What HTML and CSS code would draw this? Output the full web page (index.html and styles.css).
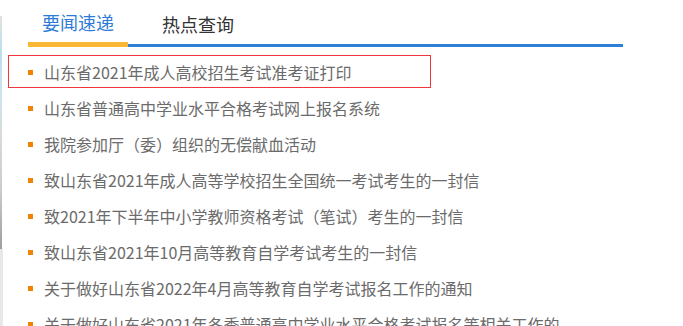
FILE: index.html
```html
<!DOCTYPE html>
<html lang="zh-CN">
<head>
<meta charset="utf-8">
<title>要闻速递</title>
<link rel="stylesheet" href="styles.css">
</head>
<body>
<div class="page">
  <div class="edge">
    <div class="edge-img"></div>
    <div class="edge-grey"></div>
  </div>
  <div class="main">
    <div class="tabs">
      <div class="tab active">要闻速递</div>
      <div class="tab">热点查询</div>
    </div>
    <ul class="news">
      <li class="item focused"><span class="dot"></span>山东省2021年成人高校招生考试准考证打印</li>
      <li class="item"><span class="dot"></span>山东省普通高中学业水平合格考试网上报名系统</li>
      <li class="item"><span class="dot"></span>我院参加厅（委）组织的无偿献血活动</li>
      <li class="item"><span class="dot"></span>致山东省2021年成人高等学校招生全国统一考试考生的一封信</li>
      <li class="item"><span class="dot"></span>致2021年下半年中小学教师资格考试（笔试）考生的一封信</li>
      <li class="item"><span class="dot"></span>致山东省2021年10月高等教育自学考试考生的一封信</li>
      <li class="item"><span class="dot"></span>关于做好山东省2022年4月高等教育自学考试报名工作的通知</li>
      <li class="item"><span class="dot"></span>关于做好山东省2021年冬季普通高中学业水平合格考试报名等相关工作的</li>
    </ul>
  </div>
</div>
</body>
</html>
```
FILE: styles.css
```css
html, body {
  margin: 0;
  padding: 0;
  background: #fff;
  overflow: hidden;
}
body {
  font-family: "Noto Sans CJK SC", "Microsoft YaHei", sans-serif;
  width: 683px;
  height: 326px;
}
.page {
  display: flex;
  height: 326px;
}
.edge {
  width: 2px;
  display: flex;
  flex-direction: column;
  padding-top: 16px;
}
.edge-img {
  height: 233px;
  background: linear-gradient(180deg, #e6e2da 0%, #b9dfee 15%, #cfe4ec 35%, #d8d8d4 55%, #c9ccca 75%, #9e9e9c 100%);
}
.edge-grey {
  flex: 1;
  width: 3px;
  background: #e8e8e8;
}
.main {
  margin-left: 26px;
  width: 595px;
}
.tabs {
  display: flex;
  align-items: flex-end;
  border-bottom: 3px solid #2d7fd7;
  height: 44px;
}
.tab {
  width: 100px;
  margin-right: 20px;
  text-align: center;
  font-size: 18px;
  line-height: 40px;
  color: #333;
  height: 40px;
}
.tab.active {
  color: #2d7bd6;
  border-bottom: 5px solid #fcb735;
  margin-bottom: -3px;
}
.news {
  list-style: none;
  margin: 0;
  padding: 0;
  padding-top: 7px;
}
.item {
  position: relative;
  display: flex;
  align-items: center;
  height: 36px;
  font-size: 16px;
  color: #6b6b6b;
  white-space: nowrap;
}
.dot {
  width: 5px;
  height: 5px;
  background: #f08300;
  margin-right: 11px;
  flex: none;
}
.item.focused::after {
  content: "";
  position: absolute;
  left: -20px;
  top: 1px;
  width: 421px;
  height: 31px;
  border: 1px solid #f0363b;
}
```
